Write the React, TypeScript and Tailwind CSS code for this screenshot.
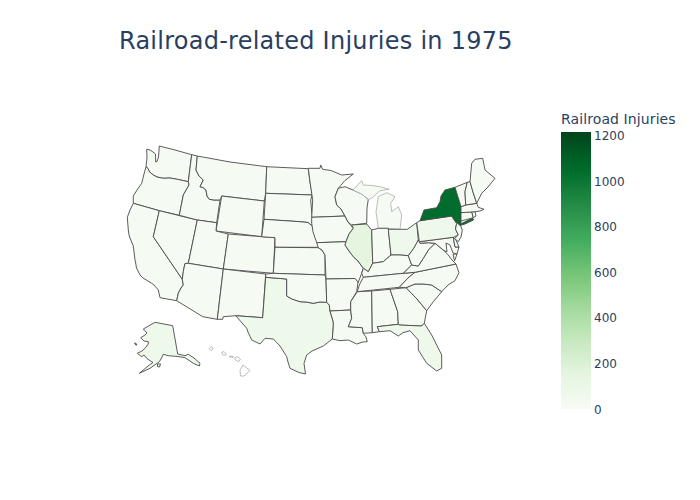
const FONT = "font-['DejaVu_Sans',sans-serif]";

const pale = "#f5fbf2";
const tint = "#eff9eb";
const ill = "#e5f5e0";
const dark = "#006d2c";

type Region = { id: string; fill: string; pts: string; faint?: boolean };

// outlines traced from the albers projection, in page pixels
const regions: Region[] = [
  { id: "WA", fill: pale, pts: "146.7,149.3 150,150 153,152 155.5,154 155.7,162 157,161.5 158.5,157 159.3,146 175,150 191.7,154.7 188.3,181.7 177.3,179.3 170,178 163.3,178.3 157,177 153.3,175 149.3,171.7 148,168.5 146,166.7 147,158" },
  { id: "OR", fill: pale, pts: "146,166.7 148,168.5 149.3,171.7 153.3,175 157,177 163.3,178.3 170,178 177.3,179.3 188.3,181.7 189,185 183.3,195 179.3,215.3 159.3,210.7 133.3,203.3 133.3,196 137,190 141.7,183.3 144,174" },
  { id: "CA", fill: pale, pts: "133.3,203.3 159.3,210.7 153.3,236.7 182.3,279.3 183.3,285 181,288 178.3,293.3 176.7,300.7 160,297.7 158.3,290 154,285 151.7,283.3 143,278 140,275 136.5,268 135.5,262 135,260 133.3,246 130,238 129,235 128.3,230 127.3,217.3 130,210" },
  { id: "NV", fill: pale, pts: "159.3,210.7 197.3,220 188.3,263.3 185,263.5 184,268 183.3,271.7 182.3,279.3 153.3,236.7" },
  { id: "ID", fill: pale, pts: "191.7,154.7 197.3,156 196,170 199,176 203.3,180 200,186.7 203,187.5 206,190 207,196 209.3,199.3 214,200 220,200 216.7,222.7 197.3,220 179.3,215.3 183.3,195 189,185 188.3,181.7" },
  { id: "MT", fill: pale, pts: "197.3,156 230,162 266.7,166.7 265.7,193.3 264.3,201 221.7,196 220,200 214,200 209.3,199.3 207,196 206,190 203,187.5 200,186.7 203.3,180 199,176 196,170" },
  { id: "WY", fill: pale, pts: "221.7,196 264.3,201 261.7,236.7 216,231" },
  { id: "UT", fill: pale, pts: "197.3,220 216.7,222.7 216,231 228.3,234 223.3,269 188.3,263.3" },
  { id: "CO", fill: pale, pts: "228.3,234 275,237.7 273.3,273.3 223.3,269" },
  { id: "AZ", fill: pale, pts: "188.3,263.3 223.3,269 217.3,319.3 202.7,316.7 176.7,300.7 178.3,293.3 181,288 183.3,285 182.3,279.3 183.3,271.7 184,268 185,263.5" },
  { id: "NM", fill: pale, pts: "223.3,269 265.7,274 262.7,317.7 235.7,315.7 223.3,316.7 222.7,319.3 217.3,319.3" },
  { id: "TX", fill: tint, pts: "265.7,277.3 286.7,279 286.7,296 292,299 300,301.7 306,302 313.3,303.3 320,302 326.7,302.3 329.3,305 330,311 333.3,322 333.3,326.7 332.3,339 323.3,346 312,351 306.7,355 304,363.3 305.5,374 299,372.5 290,368.3 288,362 286.7,356.7 280,346 273.3,339 265,338.3 260,344 251.7,340 248,332 246.7,328.3 235.7,315.7 262.7,317.7" },
  { id: "ND", fill: pale, pts: "266.7,166.7 308.3,168.7 310,182 312.3,195 265.7,193.3" },
  { id: "SD", fill: pale, pts: "265.7,193.3 312.3,195 310.7,200 312.3,218.3 312.3,226 308,222.5 300,221.7 264,219.3" },
  { id: "NE", fill: pale, pts: "264,219.3 300,221.7 308,222.5 312.3,226 314,232 316.7,240 320,247.3 275,247.3 275,237.7 261.7,236.7" },
  { id: "KS", fill: pale, pts: "275,247.3 318.3,247.7 322,250 325,255 325,275 273.3,273.3" },
  { id: "OK", fill: pale, pts: "265.7,274 273.3,273.3 325,275 326,279 326.7,302.3 320,302 313.3,303.3 306,302 300,301.7 292,299 286.7,296 286.7,279 265.7,277.3" },
  { id: "MN", fill: pale, pts: "308.3,168.3 320,168.3 320.7,165 322.7,169.3 331,170.5 341.7,175 353.3,174 345,180.5 338.3,188.3 335,196.7 336.7,205 341,209 345,216 311.7,217.3 312.7,200 310,182" },
  { id: "IA", fill: pale, pts: "311.7,217.3 345,216 348,222 353.3,228.3 349,234 346,241.7 316.7,242.7 313,232 311.7,223.3" },
  { id: "MO", fill: pale, pts: "316.7,242.7 346,241.7 345,245 349,251 353.3,256.7 358,261 363.3,268.3 361.7,273.3 358,283 355,278.5 326,279 325,255 322,250 318.3,247.7" },
  { id: "AR", fill: pale, pts: "326,279 355,278.5 358,282 356.7,291.7 350.7,301.7 350.7,310 330,311 329.3,305 326.7,302.3" },
  { id: "LA", fill: pale, pts: "330,311 350.7,310 351.7,318.3 348.3,326.7 362.3,327.7 363.3,333.3 366,337 367.3,341.7 363,342 356.7,344 348.3,340 340,340.7 332.3,339 333.3,326.7 333.3,322" },
  { id: "WI", fill: pale, pts: "338.3,188.3 345,186.7 353,190 361.7,194 368.3,199.3 367,208 366.7,223.3 351.7,225 348,222 345,216 341,209 336.7,205 335,196.7" },
  { id: "MIU", fill: pale, faint: true, pts: "353,190 361.7,180.7 363.3,185 372,185.5 380,186.7 389.3,189.3 380,190.7 371.7,198.3 368.3,199.3 361.7,194" },
  { id: "MIL", fill: pale, faint: true, pts: "378.3,228.3 376,211.7 378.3,196.7 386.7,192.7 395,196.7 390.7,203.3 391.7,211.7 398.3,206.7 401.7,215 400,229.3 388.3,228.3" },
  { id: "IL", fill: ill, pts: "351.7,225 366.7,224 371.7,230 372.7,263.3 368.3,271.7 363.3,268.3 358,261 353.3,256.7 349,251 345,245 346,241.7 349,234 353.3,228.3" },
  { id: "IN", fill: pale, pts: "371.7,230 378.3,228.3 388.3,228.3 391,255 383.3,261.7 372.7,263.3" },
  { id: "OH", fill: tint, pts: "388.3,229.3 400,229.3 407.3,229.3 416.7,222.7 418.3,240 414,248 408.3,255.7 400,255 391,255" },
  { id: "KY", fill: pale, pts: "368.3,271.7 372.7,263.3 383.3,261.7 391,255 400,255 408.3,255.7 411.7,265 403.3,273.3 363.3,277.3 361.7,273.3 363.3,268.3" },
  { id: "TN", fill: pale, pts: "363.3,277.3 403.3,273.3 415,272.3 408,278 399.3,287.3 357.3,291.7 359.3,285" },
  { id: "MS", fill: pale, pts: "357.3,291.7 371.7,291 372.3,332.7 363.3,333.3 362.3,327.7 348.3,326.7 351.7,318.3 350.7,310 350.7,301.7" },
  { id: "AL", fill: pale, pts: "371.7,291 390,289.3 397.7,311.7 398.3,324.3 377.3,326.7 379.3,331.7 372.3,332.7" },
  { id: "GA", fill: pale, pts: "390,289.3 406,287.7 417,299 426.7,310.7 424.3,323.3 421.7,326 399,325 398.3,324.3 397.7,311.7" },
  { id: "FL", fill: tint, pts: "377.3,326.7 398.3,324.3 399,325 421.7,326 424.3,323.3 431.7,335 441.7,355 441.7,368.3 436.7,371 426.7,363.3 418.3,350 418.3,340 410,330.7 403,332.7 398.3,336 390,330.7 379.3,331.7" },
  { id: "SC", fill: pale, pts: "406,287.7 415,284 423.3,284 431.7,285 441.7,291.7 433.3,301.7 426.7,310.7 417,299" },
  { id: "NC", fill: pale, pts: "415,272.3 456,264 459,272.7 455,280.7 448,285 441.7,291.7 431.7,285 423.3,284 415,284 406,287.7 399.3,287.3 408,278" },
  { id: "VA", fill: pale, pts: "403.3,273.3 411.7,265 418.3,266 423.3,258.3 428.3,250 435,243.3 443.3,250 448.3,255 452,260 456,264 415,272.3" },
  { id: "VA2", fill: pale, pts: "453,254 457,254 454.5,261" },
  { id: "WV", fill: pale, pts: "418.3,240 419.3,241.7 420,243.3 428.3,242.7 435,243.3 428.3,250 423.3,258.3 418.3,266 411.7,265 408.3,255.7 414,248" },
  { id: "MD", fill: pale, pts: "419.3,241.7 453.3,237.3 455,247 459,247 457,254 453,253 450,245 446,243 447,252 443.3,250 435,243.3 428.3,242.7 420,243.3" },
  { id: "DE", fill: pale, pts: "453.3,237.3 456,240 459,247 455,247" },
  { id: "PA", fill: tint, pts: "416.7,222.7 420,220.7 451.7,216 455,221 456.7,223.3 455.5,229 458.3,235 453.3,237.3 419.3,241.7" },
  { id: "NJ", fill: pale, pts: "455,221 461,221.7 460.3,225 462.3,230 461,237 458.3,241.7 454.5,238.5 458.3,235 455.5,229 456.7,223.3" },
  { id: "NY", fill: dark, pts: "420,220.7 424,210 436.7,207.7 440,201.7 441,196 445,190 455,187.3 461,206.7 461.7,210 461,221 460.5,224 472.7,218 473.5,220 465,224 460,225.5 455,221 451.7,216" },
  { id: "CT", fill: pale, pts: "461,212.7 471.7,211.7 473.3,217.7 461,221" },
  { id: "RI", fill: pale, pts: "471.7,211.7 475,211.7 476,216 473.3,217.7" },
  { id: "MA", fill: pale, pts: "461,206.7 465.7,205 476.7,203.3 478.3,207.3 484,209.3 480,211 475,211.7 461,212.7" },
  { id: "VT", fill: pale, pts: "455,187.3 467.3,182.3 465,191.7 465.7,205 461,206.7" },
  { id: "NH", fill: pale, pts: "467.3,182.3 470,181.7 473,192 476.7,203.3 465.7,205 465,191.7" },
  { id: "ME", fill: pale, pts: "470,181.7 471.7,163.3 475,159.3 482.7,158.3 485,170 495,178.3 488,187 481.7,193.3 476.7,203.3 473,192" },
  { id: "AK", fill: tint, pts: "155,322.3 172.7,325.7 177.7,354 185,355.7 188.3,354.3 194,358 200,363.3 199.3,366 193.3,363.3 185,357.7 178,356.5 168.3,355.7 163.3,354.3 161,359 159.3,361.7 150,368.3 139.3,373.3 149.3,365 153,362.5 149,360 146.7,358.3 144,355 141.7,356.7 137.3,353.3 142,351 145,348.3 148.3,344 148.3,341.7 144,341 140.7,337.7 145,335 147,333 143.3,329" },
  { id: "AK2", fill: tint, pts: "134.5,343 136,343.3 137,345 135.8,345" },
  { id: "AK3", fill: tint, pts: "157.5,364 160.5,364 159.5,367 157.5,366.5" },
  { id: "HI1", fill: "#ffffff", faint: true, pts: "209,348.5 211.5,346.5 213,349 211,350.5" },
  { id: "HI2", fill: "#ffffff", faint: true, pts: "221.5,352.5 224,351.5 226.5,354.5 223.5,355.5" },
  { id: "HI3", fill: "#ffffff", faint: true, pts: "229.5,356 233.5,356.5 233,357.5 229.5,357" },
  { id: "HI4", fill: "#ffffff", faint: true, pts: "234.5,358 237,356.5 240.5,359 239,361.5 236,360.5" },
  { id: "HI5", fill: "#ffffff", faint: true, pts: "240,370 243,365 250,370.5 244,376 240.5,376" },
];

const ticks = ["1200", "1000", "800", "600", "400", "200", "0"];

export default function App() {
  return (
    <div className={`flex h-[500px] w-[700px] flex-col overflow-hidden bg-white text-[#2a3f5f] ${FONT}`}>
      <div className="flex h-[82px] items-center pl-[119px] text-[24px] tracking-[0.25px]">
        Railroad-related Injuries in 1975
      </div>
      <div className="flex">
        <svg className="h-[418px] w-[550px] shrink-0" viewBox="0 82 550 418">
          {regions.map((r) => (
            <polygon
              key={r.id}
              points={r.pts}
              fill={r.fill}
              stroke={r.faint ? "#b4b4b4" : "#4a4a4a"}
              strokeWidth={0.9}
              strokeLinejoin="round"
            />
          ))}
        </svg>
        <div className="ml-[11px] flex flex-col">
          <div className="mt-[28px] h-[22px] whitespace-nowrap text-[14px] leading-[18px] tracking-[0.1px]">Railroad Injuries</div>
          <div className="flex">
            <div className="h-[277px] w-[30px] bg-[linear-gradient(to_top,#f7fcf5_0%,#e5f5e0_12.3%,#c7e9c0_24.6%,#a1d99b_36.9%,#74c476_49.2%,#41ab5d_61.5%,#238b45_73.8%,#006d2c_86.1%,#00441b_100%)]" />
            <div className="-mt-[3px] ml-[3px] flex flex-col gap-[31.6px]">
              {ticks.map((t) => (
                <div key={t} className="h-[14px] text-[12px] leading-[14px]">
                  {t}
                </div>
              ))}
            </div>
          </div>
        </div>
      </div>
    </div>
  );
}
